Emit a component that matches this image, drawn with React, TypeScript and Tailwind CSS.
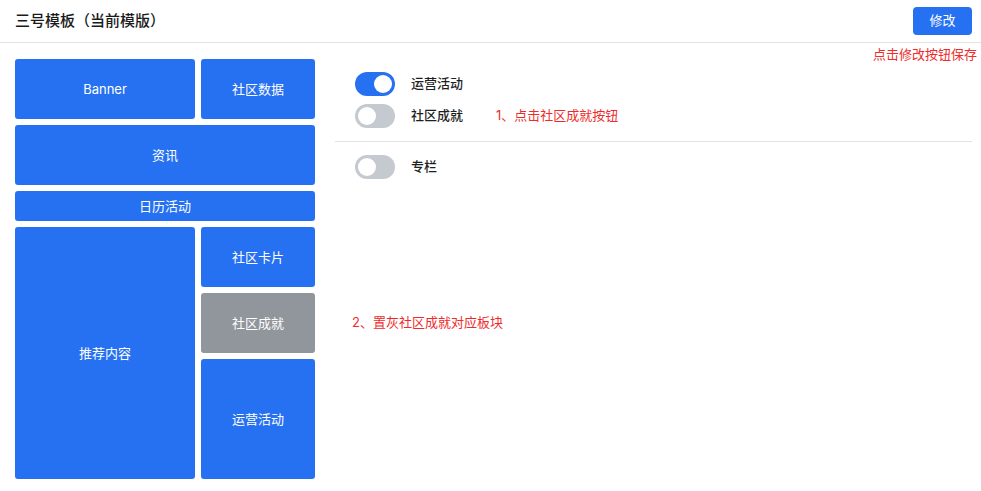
import React from 'react';

const font = { fontFamily: 'Inter, "Noto Sans CJK SC", sans-serif' };

function Block({ label, className }: { label: string; className: string }) {
    return (
        <div className={`flex items-center justify-center pt-[2px] rounded-[3px] text-[13px] text-white ${className}`}>
            {label}
        </div>
    );
}

function Toggle({ on, label }: { on: boolean; label: string }) {
    return (
        <div className="flex items-center gap-4">
            <div
                className={`w-10 h-6 rounded-full p-[3px] flex items-center ${
                    on ? 'bg-[#2671f2] justify-end' : 'bg-[#c5c9d0] justify-start'
                }`}
            >
                <div className="w-[18px] h-[18px] rounded-full bg-white" />
            </div>
            <span className="text-[13px] font-medium text-[#1f1f1f]">{label}</span>
        </div>
    );
}

export default function App() {
    return (
        <div className="relative w-[981px] h-[491px] bg-white" style={font}>
            {/* 顶部 */}
            <div className="h-[43px] flex items-center justify-between pl-[15px] pr-[9px] border-b border-[#e3e3e3]">
                <h1 className="text-[15px] font-medium text-[#1a1a1a]">三号模板（当前模版）</h1>
                <button className="w-[59px] h-[28px] rounded-[4px] bg-[#2671f2] text-white text-[13px]">修改</button>
            </div>
            <div className="absolute top-[45px] right-[4px] text-[13px] text-[#ee2b2b]">点击修改按钮保存</div>

            <div className="flex gap-5 pl-[15px] pr-[9px] pt-4">
                {/* 模板预览 */}
                <div className="w-[300px] shrink-0 flex flex-col gap-[6px]">
                    <div className="flex gap-[6px]">
                        <Block label="Banner" className="w-[180px] h-[60px] bg-[#2671f2]" />
                        <Block label="社区数据" className="flex-1 h-[60px] bg-[#2671f2]" />
                    </div>
                    <Block label="资讯" className="h-[60px] bg-[#2671f2]" />
                    <Block label="日历活动" className="h-[30px] bg-[#2671f2]" />
                    <div className="flex gap-[6px]">
                        <Block label="推荐内容" className="w-[180px] h-[252px] bg-[#2671f2]" />
                        <div className="flex-1 flex flex-col gap-[6px]">
                            <Block label="社区卡片" className="h-[60px] bg-[#2671f2]" />
                            <Block label="社区成就" className="h-[60px] bg-[#91959c]" />
                            <Block label="运营活动" className="h-[120px] bg-[#2671f2]" />
                        </div>
                    </div>
                </div>

                {/* 开关 */}
                <div className="flex-1 flex flex-col">
                    <div className="flex flex-col gap-2 pl-5 pt-[13px] pb-[13px] border-b border-[#e3e3e3]">
                        <Toggle on label="运营活动" />
                        <div className="flex items-center">
                            <Toggle on={false} label="社区成就" />
                            <span className="ml-[33px] text-[13px] text-[#ee2b2b]">1、点击社区成就按钮</span>
                        </div>
                    </div>
                    <div className="pl-5 pt-[13px]">
                        <Toggle on={false} label="专栏" />
                    </div>
                    <div className="pl-[17px] mt-[134px] text-[13px] text-[#ee2b2b]">2、置灰社区成就对应板块</div>
                </div>
            </div>
        </div>
    );
}
